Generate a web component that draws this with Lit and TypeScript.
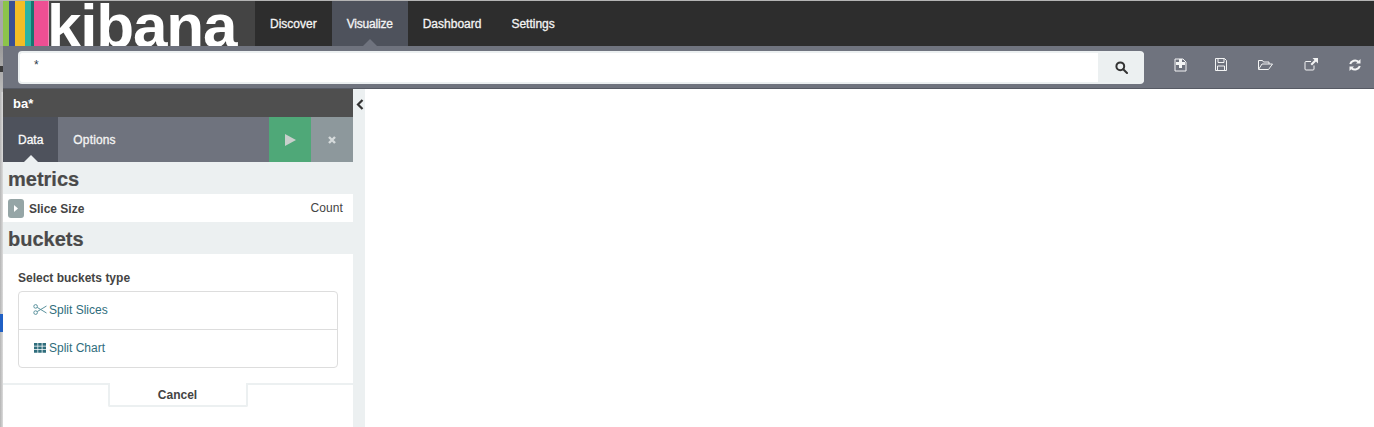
import { LitElement, html, css } from "lit";
import { customElement } from "lit/decorators.js";

@customElement("app-root")
export class AppRoot extends LitElement {
  static styles = css`
    :host { display: block; width: 1374px; height: 427px; overflow: hidden; background: #fff; font-family: "Liberation Sans", Arial, sans-serif; font-size: 12px; color: #444; }
    * { box-sizing: border-box; }
    .page { display: flex; height: 427px; }
    .edge { width: 3px; flex: none; display: flex; flex-direction: column; background: linear-gradient(90deg, #b4b4b4, #dcdcdc); }
    .edge .top { height: 46px; background: #a8a8a8; }
    .edge .mid { height: 46px; background: linear-gradient(180deg, #9a9a9a, #bcbcbc); display: flex; flex-direction: column; justify-content: center; }
    .edge .mark { height: 6px; background: #3a3a3a; }
    .edge .fill { flex: 1; }
    .edge .blue { height: 18px; background: #1f5fc4; }
    .edge .rest { height: 95px; }
    .main { flex: 1; min-width: 0; display: flex; flex-direction: column; }
    .topline { height: 1px; background: #b4b4b4; margin-left: -3px; }
    nav { height: 45px; background: #2d2d2d; display: flex; }
    .logo { width: 252px; background: #444; display: flex; overflow: hidden; }
    .stripe { height: 100%; flex: none; }
    .wordmark { font-weight: 700; font-size: 62px; line-height: 45px; color: #fff; margin-left: -2px; letter-spacing: -1.2px; height: 45px; white-space: nowrap; transform: translateY(2px); }
    .links { display: flex; }
    .link { display: flex; align-items: center; padding: 0 15px; color: #f4f4f4; font-size: 12px; font-weight: 400; -webkit-text-stroke: 0.3px #f4f4f4; position: relative; }
    .link.on { background: #4e525c; letter-spacing: -0.2px; }
    .caret { position: absolute; left: 50%; bottom: 0; margin-left: -7px; width: 0; height: 0; border-left: 7px solid transparent; border-right: 7px solid transparent; border-bottom: 7px solid #6f737e; }
    .toolbar { height: 43px; background: #6f737e; border-bottom: 1px solid #565a64; display: flex; align-items: flex-start; padding: 5px 0 0 15px; }
    .search { width: 1126px; height: 33px; border-radius: 4px; background: #fff; border: 1px solid #ecf0f1; border-width: 2px 0 2px 2px; display: flex; overflow: hidden; flex: none; }
    .search .q { flex: 1; padding: 5px 14px; color: #2d3a4a; font-size: 12px; }
    .search .go { width: 46px; background: #ecf0f1; display: flex; align-items: center; justify-content: center; }
    .toolset { display: flex; align-items: center; height: 27px; padding-left: 30px; gap: 31px; opacity: 0.92; }
    .toolset svg { display: block; }
    .toolset .first { margin-right: -3px; }
    .body { flex: 1; display: flex; min-height: 0; }
    .side { width: 350px; flex: none; display: flex; flex-direction: column; background: #ecf0f1; }
    .gutter { width: 12px; flex: none; background: #ecf0f1; padding-top: 10px; padding-left: 3px; }
    .index { height: 28px; background: #4f4f4f; color: #fff; font-weight: 700; font-size: 13px; line-height: 29px; padding-left: 10px; }
    .tabs { height: 45px; background: #6f737e; display: flex; }
    .tab { display: flex; align-items: center; padding: 0 15px; color: #f4f4f4; font-size: 12px; -webkit-text-stroke: 0.3px #f4f4f4; position: relative; }
    .tab.on { background: #4e525c; color: #fff; }
    .tab.wide { letter-spacing: 0.15px; }
    .tab .caret { border-bottom-color: #ecf0f1; }
    .grow { flex: 1; }
    .run { width: 42px; background: #4fa878; display: flex; align-items: center; justify-content: center; }
    .close { width: 42px; background: #8d989c; display: flex; align-items: center; justify-content: center; }
    h2 { margin: 0; font-size: 20px; font-weight: 700; color: #4a4a4a; line-height: 34px; height: 32px; padding-left: 5px; -webkit-text-stroke: 0.2px #4a4a4a; }
    .metric { height: 28px; background: #fff; display: flex; align-items: center; padding: 0 10px 0 5px; }
    .toggle { width: 16px; height: 19px; border-radius: 3px; background: #95a5a6; display: flex; align-items: center; justify-content: center; margin-right: 5px; }
    .metric b { font-size: 12px; padding-top: 2px; }
    .metric .count { margin-left: auto; font-size: 12px; letter-spacing: 0.1px; }
    .panel { flex: 1; background: #fff; display: flex; flex-direction: column; padding-top: 17px; }
    .panel .title { font-weight: 700; font-size: 12px; line-height: 14px; padding-left: 15px; margin-bottom: 6px; }
    .list { margin: 0 15px; border: 1px solid #ddd; border-radius: 4px; height: 77px; display: flex; flex-direction: column; }
    .item { flex: 1; display: flex; align-items: center; padding: 0 0 2px 14px; color: #2f6d7c; font-size: 12px; gap: 2px; }
    .item + .item { border-top: 1px solid #ddd; }
    .foot { margin-top: 15px; border-top: 2px solid #ecf0f1; display: flex; justify-content: center; }
    .cancel { width: 140px; height: 24px; margin-top: -2px; margin-left: -1px; padding-top: 2px; background: #fff; border: 2px solid #ecf0f1; border-top: 0; display: flex; align-items: center; justify-content: center; font-weight: 700; font-size: 12px; border-radius: 0 0 2px 2px; }
    .canvas { flex: 1; background: #fff; }
  `;

  render() {
    const stripes: [number, string][] = [[6, "#8cc44a"], [6, "#3a4f92"], [10, "#f3bd25"], [6, "#2bb3a3"], [3, "#17756f"], [14, "#ee4f93"], [1, "#f08ab5"]];
    return html`<div class="page">
      <div class="edge"><div class="top"></div><div class="mid"><div class="mark"></div></div><div class="fill"></div><div class="blue"></div><div class="rest"></div></div>
      <div class="main">
        <div class="topline"></div>
        <nav>
          <div class="logo">
            ${stripes.map(([w, c]) => html`<div class="stripe" style="width:${w}px;background:${c}"></div>`)}
            <div class="wordmark">kibana</div>
          </div>
          <div class="links">
            <div class="link">Discover</div>
            <div class="link on">Visualize<span class="caret"></span></div>
            <div class="link">Dashboard</div>
            <div class="link">Settings</div>
          </div>
        </nav>
        <div class="toolbar">
          <div class="search">
            <div class="q">*</div>
            <div class="go">
              <svg width="13" height="13" viewBox="0 0 13 13" fill="none" stroke="#333" stroke-width="2"><circle cx="5.3" cy="5.3" r="3.9"/><path d="M8.2 8.2 12 12" stroke-linecap="round"/></svg>
            </div>
          </div>
          <div class="toolset">
            <svg class="first" width="13" height="14" viewBox="0 0 13 14"><path d="M1 1h8l3 3v9H1z" fill="none" stroke="#fff"/><path d="M5 1h3v3h3v3H8v3H5V7H2V4h3z" fill="#fff"/></svg>
            <svg width="12" height="13" viewBox="0 0 12 13" fill="none" stroke="#fff"><path d="M.5.5h9l2 2v10H.5z"/><path d="M3 .5v4h6v-4M2.500 12.500V8h7v4.500"/></svg>
            <svg width="15" height="11" viewBox="0 0 15 11" fill="none" stroke="#fff"><path d="M.5 10V1.500h4l1 1.500h5.500v2"/><path d="M.5 10.500h10l4-5.500H4z"/></svg>
            <svg width="14" height="13" viewBox="0 0 14 13"><path d="M10 7.500V11a1 1 0 0 1-1 1H2a1 1 0 0 1-1-1V4.500a1 1 0 0 1 1-1h5" fill="none" stroke="#fff"/><path d="M8.500 0H14v5.500l-2-2-4 4-1.500-1.500 4-4z" fill="#fff"/></svg>
            <svg width="12" height="12" viewBox="0 0 12 12" fill="none" stroke="#fff" stroke-width="2"><path d="M1.200 5a5 4.500 0 0 1 8.300-2.200"/><path d="M10.800 7a5 4.500 0 0 1-8.300 2.200"/><path d="M11.500 0v4.500H7z" fill="#fff" stroke="none"/><path d="M.5 12V7.500H5z" fill="#fff" stroke="none"/></svg>
          </div>
        </div>
        <div class="body">
          <div class="side">
            <div class="index">ba*</div>
            <div class="tabs">
              <div class="tab on">Data<span class="caret"></span></div>
              <div class="tab wide">Options</div>
              <div class="grow"></div>
              <div class="run"><svg width="11" height="12" viewBox="0 0 11 12"><path d="M0 0l11 6-11 6z" fill="#c9cfcc"/></svg></div>
              <div class="close"><svg width="8" height="8" viewBox="0 0 8 8" stroke="#d5dadb" stroke-width="2.400"><path d="M1 1l6 6M7 1 1 7"/></svg></div>
            </div>
            <h2>metrics</h2>
            <div class="metric">
              <span class="toggle"><svg width="4" height="7" viewBox="0 0 4 7"><path d="M0 0l4 3.500L0 7z" fill="#fff"/></svg></span>
              <b>Slice Size</b><span class="count">Count</span>
            </div>
            <h2>buckets</h2>
            <div class="panel">
              <div class="title">Select buckets type</div>
              <div class="list">
                <div class="item"><svg width="14" height="11" viewBox="0 0 14 11" fill="none" stroke="#5b929d"><circle cx="2.600" cy="2.400" r="1.800"/><circle cx="2.600" cy="8.600" r="1.800"/><path d="M4.200 3.400 13.500 9M4.200 7.600 13.500 2"/></svg>Split Slices</div>
                <div class="item"><svg width="14" height="10" viewBox="0 0 14 10"><path d="M1 0h3.500v2.800H1zM5.200 0h3.500v2.800H5.200zM9.500 0H13v2.800H9.500zM1 3.500h3.500v2.800H1zM5.200 3.500h3.500v2.800H5.200zM9.500 3.500H13v2.800H9.500zM1 7h3.500v2.800H1zM5.200 7h3.500v2.800H5.200zM9.500 7H13v2.800H9.500z" fill="#2f6d7c"/></svg>Split Chart</div>
              </div>
              <div class="foot"><div class="cancel">Cancel</div></div>
            </div>
          </div>
          <div class="gutter"><svg width="8" height="11" viewBox="0 0 8 11" fill="none" stroke="#333" stroke-width="2.200"><path d="M6.500 1 2 5.500 6.500 10"/></svg></div>
          <div class="canvas"></div>
        </div>
      </div>
    </div>`;
  }
}
